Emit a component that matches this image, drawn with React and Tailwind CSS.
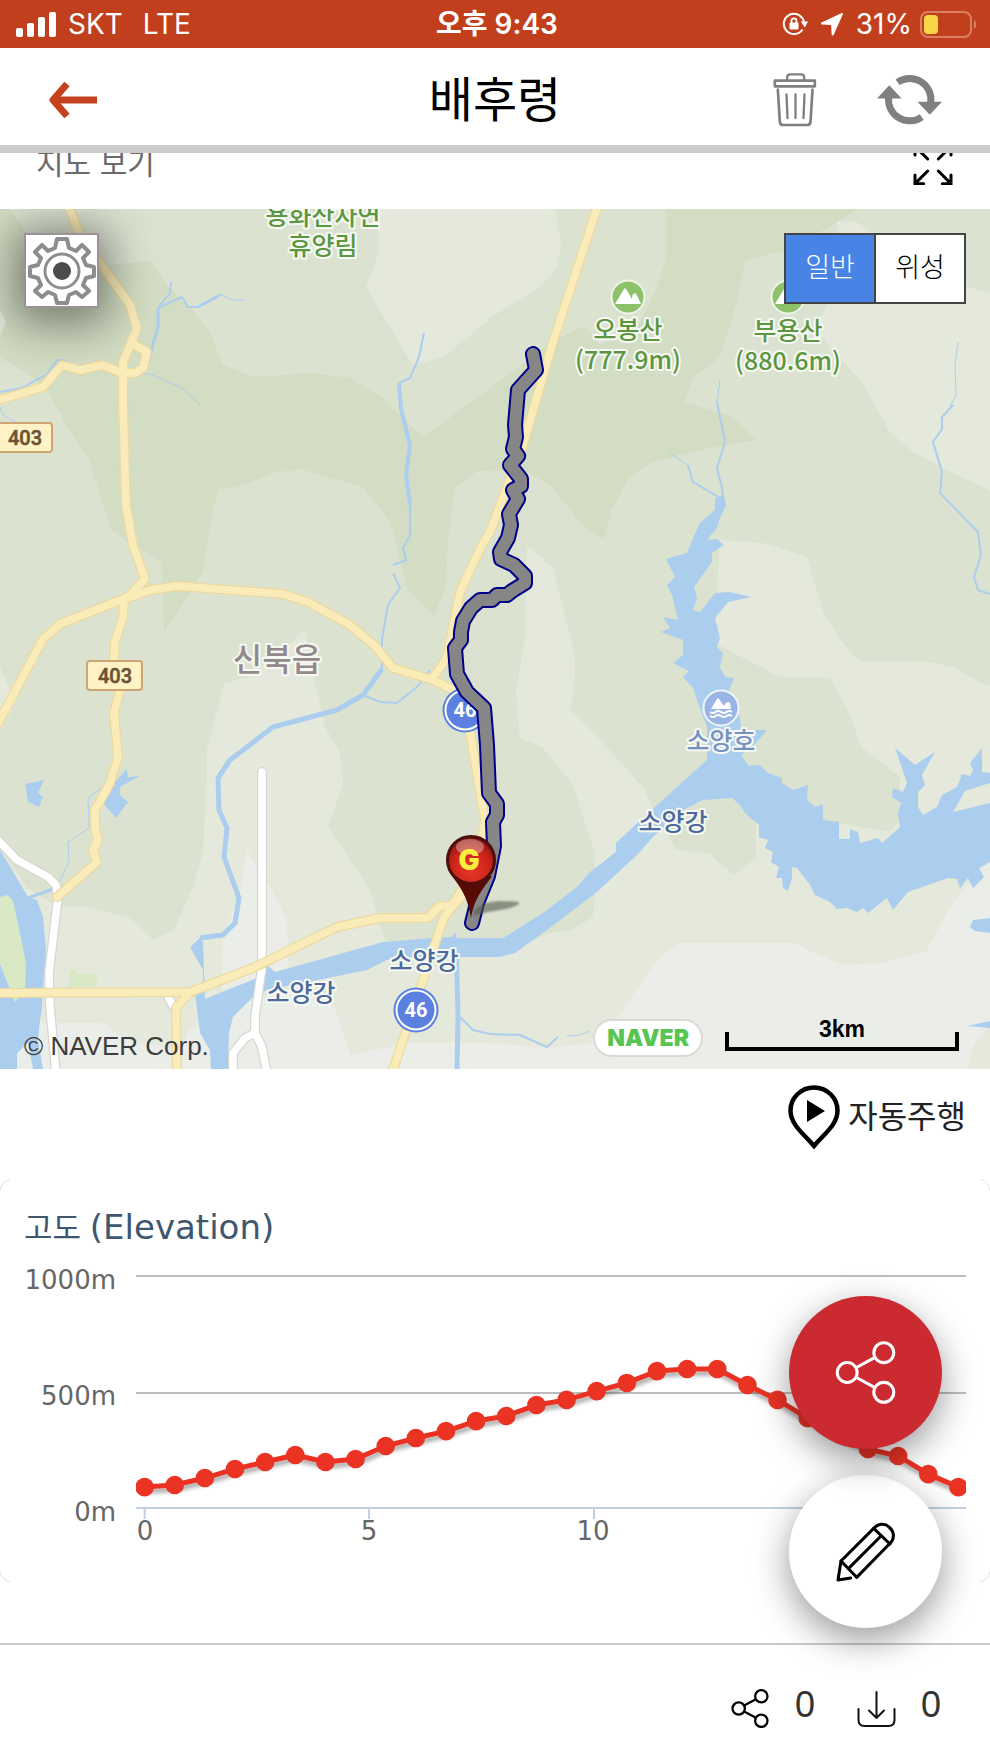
import React, { useState } from "react";

const GREEN_DARK =
    "0,0 10,0 34,33 110,56 150,52 170,79 193,101 210,124 223,156 253,168 310,164 350,169 383,189 407,213 423,228 467,196 490,179 517,159 557,129 585,117 600,136 640,113 657,79 666,49 666,0 858,0 838,13 787,41 745,51 737,93 720,148 693,169 684,193 733,208 756,231 700,241 650,254 630,268 612,299 604,330 585,319 550,276 527,263 490,261 477,262 455,279 448,329 446,379 434,408 407,379 390,313 363,278 300,260 273,264 247,275 219,281 212,304 203,363 187,388 164,424 162,353 138,339 111,321 89,251 72,226 47,181 33,169 0,148";

const GREEN_LIGHT = [
    "377,0 379,43 366,78 397,129 413,156 443,148 473,124 490,109 540,78 557,59 561,34 555,0",
    "837,12 857,13 870,23 900,60 967,78 990,84 990,281 957,266 913,243 890,223 862,173 840,149 820,126 817,113 827,96 845,60",
    "720,331 763,334 807,348 823,403 840,431 859,452 930,453 953,458 985,476 990,476 990,634 880,634 900,610 900,568 861,538 848,501 830,469 780,468 747,451 715,434",
    "0,640 13,658 27,679 57,697 87,698 130,709 153,731 174,721 193,678 203,644 207,564 207,541 224,474 247,468 290,435 305,421 312,460 325,518 340,544 343,576 328,618 370,681 385,731 450,745 500,745 550,724 572,721 593,708 596,664 594,641 573,576 542,538 520,529 516,481 525,431 527,336 553,359 562,396 572,436 575,454 574,481 570,501 603,534 643,578 653,598 675,640 710,645 733,666 756,649 756,600 990,640 990,860 0,860",
    "0,458 10,481 12,503 0,518",
    "0,100 6,114 0,126",
];

const LAND = [
    "247,640 257,661 270,678 287,711 288,760 222,781 223,731 230,711 240,684",
    "40,814 103,814 127,831 180,841 190,820 205,814 250,790 300,780 333,795 345,830 350,846 390,838 410,834 490,834 550,839 590,834 618,808 657,751 680,734 793,734 842,756 883,754 926,743 950,698 970,674 990,651 990,860 0,860",
];

const RIVER =
    "190,738 200,729 203,733 205,790 257,769 267,756 275,763 383,733 433,729 452,728 455,724 457,729 503,729 543,704 577,678 590,663 616,643 616,634 633,618 657,596 707,551 707,518 698,494 693,479 683,468 689,462 673,454 683,446 683,431 661,423 670,419 663,408 678,411 672,386 667,376 675,368 666,350 687,344 693,329 700,314 715,301 715,289 720,289 723,283 726,296 720,309 717,319 707,331 717,330 724,336 712,344 712,353 694,378 697,389 693,401 700,403 715,384 730,383 751,388 728,393 715,409 720,429 717,438 723,444 720,458 725,468 734,469 728,484 740,508 741,521 767,521 756,534 741,546 749,557 760,556 768,564 782,569 782,574 793,581 808,576 807,591 815,598 823,595 823,611 839,613 839,630 850,630 850,620 858,623 860,634 878,629 882,634 900,618 898,604 901,594 892,588 893,579 903,583 907,574 895,539 915,556 935,543 922,566 925,576 918,583 918,598 923,606 937,598 942,586 957,578 962,565 970,567 973,561 970,554 982,539 982,563 990,564 990,574 965,582 953,603 990,594 990,653 979,659 984,668 973,679 968,669 960,679 957,670 948,669 908,683 893,701 887,689 868,704 863,699 857,703 847,699 837,700 830,693 815,686 810,676 797,659 792,658 792,669 788,682 783,679 782,669 776,669 779,658 771,653 773,643 765,639 768,631 759,628 759,616 745,604 740,596 732,589 703,591 683,601 653,628 637,646 597,683 547,721 515,744 500,748 460,748 417,748 387,751 367,761 333,768 267,781 253,788 233,808 229,824 228,860 211,860 210,841 200,824 195,784 203,784 203,761";

const PONDS = [
    "0,641 28,688 37,691 43,708 46,741 43,778 42,798 40,811 38,831 43,860 33,860 28,834 17,844 17,860 0,860",
    "25,575 44,571 38,584 43,588 39,598 28,593",
    "127,560 128,568 140,567 120,578 120,586 128,593 116,609 103,594 112,576",
    "970,718 973,711 990,709 990,724 975,722",
    "967,817 990,812 990,819",
];

const STREAMS = [
    { w: 5, d: "382,460 363,486 337,501 273,518 230,551 218,569 219,601 227,619 224,648 239,689 235,714 223,726 200,729" },
    { w: 4, d: "399,174 401,200 410,236 406,266 410,296" },
    { w: 2, d: "424,124 419,148 410,169 399,174" },
    { w: 2, d: "410,296 410,326 403,339 406,351 393,356" },
    { w: 2, d: "393,364 400,379 388,396 382,430 382,462" },
    { w: 2, d: "363,486 380,493 397,494 417,478 430,461" },
    { w: 2, d: "171,73 170,84 158,99" },
    { w: 3, d: "158,99 158,118 153,135 149,153" },
    { w: 2, d: "160,98 182,88 188,98 198,98" },
    { w: 3, d: "198,98 220,86" },
    { w: 1, d: "220,85 232,91 245,91" },
    { w: 1, d: "142,165 150,165 182,179 200,196" },
    { w: 2, d: "0,183 22,179 47,165 57,151 68,152" },
    { w: 1, d: "0,198 3,206 15,213" },
    { w: 1, d: "720,171 717,193" },
    { w: 2, d: "717,193 725,233 717,259 722,279 723,292" },
    { w: 1, d: "670,244 688,256" },
    { w: 2, d: "688,256 693,273 720,289" },
    { w: 1, d: "958,133 955,156 956,186 950,198" },
    { w: 2, d: "953,196 942,208 942,220 933,233 942,263 940,284 978,323 981,346 974,368 978,381 990,385" },
    { w: 5, d: "456,729 458,808 457,860" },
    { w: 2, d: "460,808 473,821 490,825 520,826 547,838 558,828" },
    { w: 1, d: "567,827 580,826 590,822" },
    { w: 1, d: "103,578 88,589 89,619 68,633 69,653 57,678" },
    { w: 3, d: "53,680 28,689" },
];

const WHITE_ROADS = [
    "-4,629 17,651 48,668 56,676 58,688 49,764 50,798 56,864",
    "262,563 262,758 255,808 255,824 262,838 267,864",
    "255,824 245,829 233,844 233,864",
    "168,788 176,802",
];

const YELLOW_ROADS = [
    "132,134 147,143 143,159 135,164 123,164",
    "-4,192 43,178 62,156 80,161 102,156 123,164",
    "68,-4 80,26 130,96 137,119 123,153 123,196 126,296 133,336 145,370 128,388 60,415 43,430 -4,518",
    "128,389 150,381 177,377 283,385 308,393 350,416 375,437 393,459 433,471 457,483",
    "124,392 123,408 115,433 114,451 120,481 114,504 118,548 110,574 95,601 95,619 98,631 93,641 97,653 57,688",
    "598,-4 553,133 523,236 490,323 482,336 460,383 450,433 447,448 433,469",
    "457,483 470,524 485,611 478,650 460,684 443,711 423,771 392,864",
    "-4,784 190,783 253,759 337,718 380,709 428,709 440,697 453,697 465,684",
    "190,783 176,799 177,864",
];

const TRACK =
    "533,145 536,161 518,181 515,216 516,228 513,240 518,247 510,256 521,270 521,277 513,281 518,290 509,305 511,316 508,329 500,343 501,350 514,356 525,367 525,374 512,382 507,386 497,386 492,391 480,391 471,399 463,412 461,423 461,431 455,439 457,465 467,483 484,499 487,536 489,584 497,595 497,606 493,613 494,637 488,667 477,694 472,714";

const MAP_LABELS = [
    { x: 323, y: 16, text: "용화산자연", color: "#5d9640" },
    { x: 323, y: 46, text: "휴양림", color: "#5d9640" },
    { x: 628, y: 130, text: "오봉산", color: "#5d9640" },
    { x: 628, y: 160, text: "(777.9m)", color: "#5d9640" },
    { x: 788, y: 131, text: "부용산", color: "#5d9640" },
    { x: 788, y: 161, text: "(880.6m)", color: "#5d9640" },
    { x: 721, y: 541, text: "소양호", color: "#7592c0" },
    { x: 673, y: 622, text: "소양강", color: "#4c699c" },
    { x: 424, y: 761, text: "소양강", color: "#4c699c" },
    { x: 301, y: 793, text: "소양강", color: "#4c699c" },
];

const ELEVATIONS = [
    92, 101, 131, 170, 200, 230, 200, 213, 269, 303, 333, 376, 398, 445, 467, 505, 540, 591, 600, 600, 531, 467, 389,
    325, 256, 226, 148, 92,
];

function ShareIcon({ className, strokeWidth }) {
    return (
        <svg viewBox="0 0 60 62" className={className} fill="none" stroke="currentColor" strokeWidth={strokeWidth} aria-hidden="true">
            <circle cx="12" cy="31" r="9.8" />
            <circle cx="48" cy="11.5" r="9.8" />
            <circle cx="48" cy="50.5" r="9.8" />
            <path d="M20.6 26.3 39.4 16.2M20.6 35.7 39.4 45.8" />
        </svg>
    );
}

function StatusBar() {
    return (
        <div className="grid h-12 grid-cols-3 items-center bg-[#c23f1e] pl-4 pr-3 text-[28px] leading-none text-white">
            <div className="flex items-center gap-3">
                <svg viewBox="0 0 40 25" className="h-[25px] w-10" fill="currentColor" aria-hidden="true">
                    <rect x="0" y="16" width="7" height="9" rx="2" />
                    <rect x="11" y="11" width="7" height="14" rx="2" />
                    <rect x="22" y="5" width="7" height="20" rx="2" />
                    <rect x="33" y="0" width="7" height="25" rx="2" />
                </svg>
                <span>SKT</span>
                <span className="ml-2">LTE</span>
            </div>
            <div className="text-center font-semibold">오후 9:43</div>
            <div className="flex items-center justify-end gap-2">
                <svg viewBox="0 0 26 26" className="mr-1 h-[26px] w-[26px]" fill="none" stroke="currentColor" strokeWidth="2" aria-hidden="true">
                    <path d="M20.500 18.500A10.200 10.200 0 1 1 22 11" />
                    <path d="M18.800 10.600h7.200l-3.200 5.800Z" fill="currentColor" stroke="none" />
                    <rect x="7.500" y="11.500" width="9" height="7" rx="1" fill="currentColor" stroke="none" />
                    <path d="M9.500 12.500V9.800a2.500 2.500 0 0 1 5 0v2.700" strokeWidth="1.800" />
                </svg>
                <svg viewBox="0 0 24 24" className="mr-1 h-6 w-6" fill="currentColor" aria-hidden="true">
                    <path d="M21.800 1 1.600 10.400c-1 .5-.8 1.900.4 2L10.500 13c.5 0 .7.200.7.700l.4 8.800c.1 1.200 1.600 1.400 2.100.3L23 2.100c.3-.8-.4-1.500-1.200-1.100Z" />
                </svg>
                <span>31%</span>
                <svg viewBox="0 0 58 27" className="h-[27px] w-[58px]" fill="none" aria-hidden="true">
                    <rect x="1" y="1" width="50" height="25" rx="7" stroke="#d97f62" strokeWidth="2" />
                    <rect x="4" y="4" width="14" height="19" rx="4" fill="#f7d648" />
                    <path d="M54 9c3 1 3 8 0 9Z" fill="#d97f62" />
                </svg>
            </div>
        </div>
    );
}

function Header() {
    return (
        <header className="flex h-[105px] items-center border-b-8 border-[#cbcbcb] bg-white px-12 pt-1.5">
            <div className="flex-1">
                <button type="button" aria-label="뒤로" className="block text-[#c5401c]">
                    <svg viewBox="0 0 49 36" className="h-9 w-[49px]" fill="none" stroke="currentColor" strokeWidth="7" aria-hidden="true">
                        <path d="M4 18H49" />
                        <path d="M19 2 5 18l14 16" strokeLinejoin="round" />
                    </svg>
                </button>
            </div>
            <h1 className="text-[48px] leading-none">배후령</h1>
            <div className="flex flex-1 items-center justify-end gap-[60px] text-[#808080]">
                <button type="button" aria-label="삭제">
                    <svg viewBox="98 69 131 165" className="h-[55px] w-11" fill="none" stroke="currentColor" strokeWidth="7" strokeLinecap="round" strokeLinejoin="round" aria-hidden="true">
                        <path d="M140 92V85q0-9 9-9h33q9 0 9 9v7" />
                        <rect x="103" y="95" width="120" height="17" strokeWidth="8" />
                        <path d="m112 122 6 97q1 9 10 9h72q9 0 10-9l6-97" strokeWidth="8" />
                        <path d="m138 136 3 71M165 136v71M192 136l-3 71" />
                    </svg>
                </button>
                <button type="button" aria-label="새로고침">
                    <svg viewBox="408 74 196 152" className="h-[51px] w-[65px]" fill="none" stroke="currentColor" strokeWidth="21" aria-hidden="true">
                        <path d="M470 98A64 64 0 0 1 570 160" />
                        <path d="M443 143A64 64 0 0 0 543 203" />
                        <path d="M530 157h74l-37 39ZM408 147h74l-37-40Z" fill="currentColor" stroke="none" />
                    </svg>
                </button>
            </div>
        </header>
    );
}

function RoadLines({ lines, casing, fill }) {
    return (
        <g fill="none" strokeLinejoin="round" strokeLinecap="round">
            {lines.map((d) => (
                <polyline key={d} points={d} stroke={casing} strokeWidth="10" />
            ))}
            {lines.map((d) => (
                <polyline key={d} points={d} stroke={fill} strokeWidth="7.500" />
            ))}
        </g>
    );
}

function LocalRoadBadge({ x, y }) {
    return (
        <g>
            <rect x={x} y={y} width="55" height="29" rx="3" fill="#fff3c6" stroke="#cfa673" strokeWidth="2" />
            <text x={x + 28} y={y + 22} textAnchor="middle" fontSize="20" className="font-[Roboto] font-medium" fill="#6b5232" stroke="#6b5232" strokeWidth="0.5">
                403
            </text>
        </g>
    );
}

function HighwayShield({ cx, cy }) {
    return (
        <g>
            <circle cx={cx} cy={cy} r="22.5" fill="#5b80df" />
            <circle cx={cx} cy={cy} r="19.5" fill="none" stroke="#fff" strokeWidth="2" />
            <text x={cx} y={cy + 7} textAnchor="middle" fontSize="20" className="font-[Roboto] font-bold" fill="#fff">
                46
            </text>
        </g>
    );
}

function MountainPin({ cx, cy }) {
    return (
        <g transform={`translate(${cx} ${cy})`}>
            <circle r="16.5" fill="#8dc26b" stroke="#f0f5ea" strokeWidth="2" />
            <path d="M-13 7-4-8q1-1.500 2 0L4 2 4.500-2q1.500-3 4-.5L13 7Z" fill="#fff" />
        </g>
    );
}

function GoalMarker() {
    return (
        <g>
            <path d="M474 702q8-10 26-10t20 2q-5 5-20 7t-26 6Z" fill="#555a4c" opacity="0.6" filter="url(#soft)" />
            <path d="M452 667c9 12 16 22 19 42 3-20 13-30 21-42Z" fill="#560b05" />
            <circle cx="471" cy="651" r="23.500" fill="url(#ball)" stroke="#4d0f0a" strokeWidth="3" />
            <ellipse cx="470" cy="638" rx="14" ry="8" fill="#fff" opacity="0.35" />
            <text x="469" y="661" textAnchor="middle" fontSize="28" className="font-[Inter] font-black" fill="#f6f03c">
                G
            </text>
        </g>
    );
}

function MapDrawing() {
    return (
        <svg viewBox="0 0 990 860" className="block h-auto w-full bg-[#dbe3d0]" role="img" aria-label="지도">
            <defs>
                <radialGradient id="ball" cx="0.5" cy="0.7" r="0.7">
                    <stop offset="0" stopColor="#e8392b" />
                    <stop offset="0.6" stopColor="#cb2319" />
                    <stop offset="1" stopColor="#7d120c" />
                </radialGradient>
                <filter id="soft">
                    <feGaussianBlur stdDeviation="1" />
                </filter>
            </defs>

            <polygon points={GREEN_DARK} fill="#d2ddc3" />
            {GREEN_LIGHT.map((p) => (
                <polygon key={p} points={p} fill="#e5e9dc" />
            ))}
            {LAND.map((p) => (
                <polygon key={p} points={p} fill="#ebeee8" />
            ))}
            <polygon points="968,860 973,838 990,815 990,860" fill="#e5e9dc" />

            {/* Water */}
            <g fill="#abceee">
                <polygon points={RIVER} />
                {PONDS.map((p) => (
                    <polygon key={p} points={p} />
                ))}
            </g>
            <g fill="none" stroke="#abceee" strokeLinejoin="round">
                {STREAMS.map((s) => (
                    <polyline key={s.d} points={s.d} strokeWidth={s.w} />
                ))}
            </g>
            <polygon points="0,688 8,686 13,692 20,724 26,754 25,779 15,793 0,755" fill="#d9e9c5" />
            <polygon points="69,761 77,761 78,765 97,765 97,778 69,778" fill="#d9e9c5" />

            <RoadLines lines={WHITE_ROADS} casing="#d5d7d2" fill="#ffffff" />
            <RoadLines lines={YELLOW_ROADS} casing="#ecd9a2" fill="#faecb9" />

            <LocalRoadBadge x={-3} y={214} />
            <LocalRoadBadge x={87} y={452} />
            <HighwayShield cx={465} cy={501} />
            <HighwayShield cx={416} cy={801} />

            <MountainPin cx={628} cy={88} />
            <MountainPin cx={788} cy={88} />
            <g transform="translate(721 499)">
                <circle r="17.500" fill="#98b5e6" stroke="#f1f5fb" strokeWidth="2" />
                <path d="M-10 1-4-9q1-1.500 2 0L3-2l2-3q2-2 4 0L10 1Z" fill="#fff" />
                <path d="M-11 4q3 2 5.500 0t5.500 0 5.500 0 5.500 0M-11 8q3 2 5.500 0t5.500 0 5.500 0 5.500 0" fill="none" stroke="#fff" strokeWidth="2" />
            </g>

            <g
                textAnchor="middle"
                strokeLinejoin="round"
                paintOrder="stroke"
                stroke="#f6f9f3"
                strokeWidth="4"
                className="font-['Noto_Sans_CJK_KR',sans-serif] font-medium"
            >
                <text x="277" y="462" fontSize="32" fill="#93898b">
                    신북읍
                </text>
                {MAP_LABELS.map((l) => (
                    <text key={`${l.x}-${l.y}`} x={l.x} y={l.y} fontSize="25" fill={l.color}>
                        {l.text}
                    </text>
                ))}
            </g>

            {/* Recorded route */}
            <g fill="none" strokeLinejoin="round" strokeLinecap="round">
                <polyline points={TRACK} stroke="#00008b" strokeWidth="16" />
                <polyline points={TRACK} stroke="#868686" strokeWidth="12" />
            </g>
            <GoalMarker />
        </svg>
    );
}

function MapView() {
    const [mapType, setMapType] = useState("normal");

    return (
        <section className="relative overflow-hidden">
            <MapDrawing />
            <button
                type="button"
                aria-label="지도 설정"
                className="absolute left-6 top-6 flex h-[75px] w-[75px] items-center justify-center border-2 border-[#9a9296] bg-white shadow-[0_6px_45px_10px_rgba(0,0,0,0.45)]"
            >
                <svg viewBox="-35 -35 70 70" className="h-[70px] w-[70px] shrink-0" fill="none" stroke="#8b8d91" strokeWidth="4" strokeLinejoin="round" aria-hidden="true">
                    <path
                        d="M-5-32H5L7-23 14-20 20-26 27-19 21-13 24-6 32-4V5L24 7 21 14 27 20 20 26 14 21 7 24 5 32H-5L-7 24-14 21-20 26-27 20-21 14-24 7-32 5V-4L-24-6-21-13-27-19-20-26-14-20-7-23Z"
                    />
                    <circle r="17" strokeWidth="3" />
                    <circle r="9" fill="#4b4c4e" stroke="none" />
                </svg>
            </button>
            <div className="absolute right-6 top-6 flex h-[71px] w-[182px] divide-x-2 divide-[#444] border-2 border-[#444] bg-white text-[27px] font-light">
                <button
                    type="button"
                    aria-pressed={mapType === "normal"}
                    onClick={() => setMapType("normal")}
                    className={mapType === "normal" ? "flex-1 bg-[#4884e5] text-white" : "flex-1 bg-white text-black"}
                >
                    일반
                </button>
                <button
                    type="button"
                    aria-pressed={mapType === "satellite"}
                    onClick={() => setMapType("satellite")}
                    className={mapType === "satellite" ? "flex-1 bg-[#4884e5] text-white" : "flex-1 bg-white text-black"}
                >
                    위성
                </button>
            </div>
            <div className="absolute inset-x-6 bottom-2 flex items-end justify-between">
                <p className="font-['Liberation_Sans'] text-[26px] leading-[30px] text-[#3c3c3c]">© NAVER Corp.</p>
                <div className="mr-[7px] flex items-end gap-[22px]">
                    <a
                        href="#naver"
                        className="mb-1 flex h-[38px] items-center rounded-full border-2 border-[#d9dbd6] bg-white px-3 font-[Inter] text-[23px] font-black leading-none text-[#57c552]"
                    >
                        NAVER
                    </a>
                    <div className="mb-2.5 w-[234px] text-center font-['Liberation_Sans'] text-[23px] font-bold leading-[26px]">
                        <div>3km</div>
                        <div className="-mt-2.5 h-[19px] border-4 border-t-0 border-black" />
                    </div>
                </div>
            </div>
        </section>
    );
}

function ElevationChart() {
    // plot area: 136..966 wide, 1000m at y=97, 0m at y=330
    const points = ELEVATIONS.map((v, i) => [144.6 + i * 30.14, 329.5 - v * 0.2325]);
    const line = points.map((p) => p.join(",")).join(" ");

    return (
        <section className="relative">
            <h2 className="absolute left-6 top-7 text-[31px] leading-10 text-[#3e576f]">
                고도 <span className="font-['DejaVu_Sans'] text-[34px]">(Elevation)</span>
            </h2>
            <svg viewBox="0 0 990 404" className="block h-auto w-full" role="img" aria-label="고도 그래프">
                <defs>
                    <clipPath id="plot">
                        <rect x="136" y="80" width="830" height="260" />
                    </clipPath>
                    <filter id="lineShadow" x="-5%" y="-20%" width="110%" height="150%">
                        <feDropShadow dx="1" dy="4" stdDeviation="2" floodOpacity="0.35" />
                    </filter>
                </defs>
                <path d="M0 12Q1 3 10 0M990 12q-1-9-10-12M0 392q1 8 10 11M990 392q-1 8-10 11" fill="none" stroke="#dfe3ec" />
                <path d="M136 97H966M136 214H966" stroke="#bdbdbd" strokeWidth="2" />
                <path d="M136 329H966M144.600 329v11M369 329v11M594 329v11M818 329v11" stroke="#c0d0e0" strokeWidth="2" />
                <g clipPath="url(#plot)">
                    <g filter="url(#lineShadow)">
                        <polyline points={line} fill="none" stroke="#eb3324" strokeWidth="5" strokeLinejoin="round" />
                    </g>
                    {points.map(([x, y]) => (
                        <circle key={x} cx={x} cy={y} r="9.300" fill="#eb3324" />
                    ))}
                </g>
                <g fontSize="26" fill="#666" className="font-['DejaVu_Sans']">
                    <g textAnchor="end">
                        <text x="116" y="110">1000m</text>
                        <text x="116" y="226">500m</text>
                        <text x="116" y="342">0m</text>
                    </g>
                    <g textAnchor="middle">
                        <text x="145" y="361">0</text>
                        <text x="369" y="361">5</text>
                        <text x="593" y="361">10</text>
                        <text x="818" y="361">15</text>
                    </g>
                </g>
            </svg>
        </section>
    );
}

function FloatingActions() {
    return (
        <div className="fixed bottom-[132px] right-12 flex flex-col gap-[26px]">
            <button
                type="button"
                aria-label="공유"
                className="relative z-10 flex h-[153px] w-[153px] items-center justify-center rounded-full bg-[#cb2a31] text-white shadow-[0_12px_36px_rgba(0,0,0,0.4)]"
            >
                <ShareIcon className="h-[63px] w-[61px]" strokeWidth="3" />
            </button>
            <button
                type="button"
                aria-label="편집"
                className="flex h-[153px] w-[153px] items-center justify-center rounded-full bg-white text-black shadow-[0_12px_36px_rgba(0,0,0,0.4)]"
            >
                <svg viewBox="738 786 180 180" className="h-[60px] w-[60px]" fill="none" stroke="currentColor" strokeWidth="9" strokeLinejoin="round" strokeLinecap="round" aria-hidden="true">
                    <path d="m753 903 98-98c14-14 33-17 46-4 16 14 18 33 4 48l-101 103Z" />
                    <path d="m851 805 49 47M776 925l97-97" />
                    <path d="m753 903-9 57 38-6" />
                </svg>
            </button>
        </div>
    );
}

function Footer() {
    return (
        <footer className="flex flex-1 items-start justify-end gap-[42px] border-t-2 border-[#c9c9c9] bg-white pl-12 pr-[49px] pt-[42px] font-['Liberation_Sans'] text-[36px] leading-9 text-[#333]">
            <button type="button" aria-label="공유 0" className="flex items-start gap-[26px]">
                <ShareIcon className="mt-[2px] h-[39px] w-[38px] text-black" strokeWidth="3.600" />
                <span>0</span>
            </button>
            <button type="button" aria-label="다운로드 0" className="flex items-start gap-[25px]">
                <svg viewBox="0 0 39 37" className="mt-1 h-[37px] w-[39px]" fill="none" stroke="#111" strokeWidth="2" strokeLinecap="round" strokeLinejoin="round" aria-hidden="true">
                    <path d="M19.500 1v26M12 19.500l7.500 7.500 7.500-7.500" />
                    <path d="M1.500 18v11q0 6 6 6h24q6 0 6-6V18" />
                </svg>
                <span>0</span>
            </button>
        </footer>
    );
}

export default function App() {
    return (
        <div className="flex min-h-screen flex-col bg-white font-[Inter,'Noto_Sans_CJK_KR',sans-serif] text-black">
            <StatusBar />
            <Header />
            <main>
                {/* Section title, scrolled partly under the header */}
                <div className="h-14 overflow-hidden">
                    <div className="-mt-2 flex h-10 items-center justify-between pl-9 pr-[37px]">
                        <h2 className="-mt-1 text-[30px] leading-none text-[#6b6b6b]">지도 보기</h2>
                        <button type="button" aria-label="전체 화면">
                            <svg viewBox="518 286 120 120" className="h-10 w-10" fill="none" stroke="currentColor" strokeWidth="9" strokeLinecap="round" aria-hidden="true">
                                <path d="M562 364 524 402M524 376v26h26M594 364l38 38M632 376v26h-26M562 328l-38-38M524 316v-26h26M594 328l38-38M632 316v-26h-26" />
                            </svg>
                        </button>
                    </div>
                </div>
                <MapView />
                <div className="flex h-[110px] items-start justify-end px-6 pt-4">
                    <button type="button" className="flex items-center gap-2 text-[32px] leading-none text-[#222]">
                        <svg viewBox="0 0 52 64" className="h-16 w-[52px]" fill="none" stroke="#000" strokeWidth="4.500" aria-hidden="true">
                            <path d="M26 61C16 49 2.500 40 2.500 25.500a23.500 23 0 0 1 47 0C49.500 40 36 49 26 61Z" />
                            <path d="M19 15v22l18-11Z" fill="#000" stroke="none" />
                        </svg>
                        자동주행
                    </button>
                </div>
                <ElevationChart />
                <div className="h-[60px]" />
            </main>
            <Footer />
            <FloatingActions />
        </div>
    );
}
